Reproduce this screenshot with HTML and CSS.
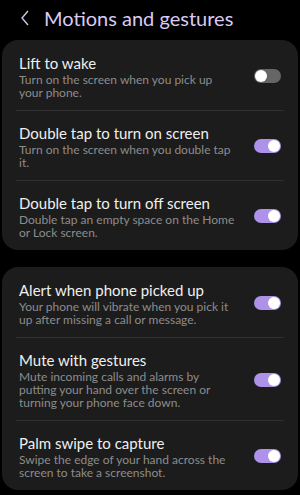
FILE: index.html
```html
<!DOCTYPE html>
<html lang="en">
  <head>
    <meta charset="UTF-8" />
    <meta name="viewport" content="width=device-width, initial-scale=1.0" />
    <title>Motions and gestures</title>
    <link rel="stylesheet" href="styles.css">
  </head>

  <body>
    <header class="top-bar">
      <span class="back">
        <svg width="10" height="16" viewBox="0 0 10 16">
          <path d="M8 1 L2 8 L8 15" fill="none" stroke="#cfc6df" stroke-width="1.4" />
        </svg>
      </span>
      <h1 class="page-title">Motions and gestures</h1>
    </header>

    <section class="card">
      <div class="row">
        <div class="texts">
          <div class="title">Lift to wake</div>
          <div class="desc">Turn on the screen when you pick up your phone.</div>
        </div>
        <span class="switch"></span>
      </div>
      <div class="row">
        <div class="texts">
          <div class="title">Double tap to turn on screen</div>
          <div class="desc">Turn on the screen when you double tap it.</div>
        </div>
        <span class="switch on"></span>
      </div>
      <div class="row">
        <div class="texts">
          <div class="title">Double tap to turn off screen</div>
          <div class="desc">Double tap an empty space on the Home or Lock screen.</div>
        </div>
        <span class="switch on"></span>
      </div>
    </section>

    <section class="card">
      <div class="row">
        <div class="texts">
          <div class="title">Alert when phone picked up</div>
          <div class="desc">Your phone will vibrate when you pick it up after missing a call or message.</div>
        </div>
        <span class="switch on"></span>
      </div>
      <div class="row">
        <div class="texts">
          <div class="title">Mute with gestures</div>
          <div class="desc">Mute incoming calls and alarms by putting your hand over the screen or turning your phone face down.</div>
        </div>
        <span class="switch on"></span>
      </div>
      <div class="row">
        <div class="texts">
          <div class="title">Palm swipe to capture</div>
          <div class="desc">Swipe the edge of your hand across the screen to take a screenshot.</div>
        </div>
        <span class="switch on"></span>
      </div>
    </section>
  </body>
</html>
```

FILE: styles.css
```css
body {
  margin: 0;
  background-color: #000;
  font-family: "Lato", "Open Sans", sans-serif;
  width: 300px;
}

.top-bar {
  height: 40px;
  display: flex;
  align-items: center;
  padding-left: 20px;
  box-sizing: border-box;
}

.back {
  display: flex;
  width: 24px;
  margin-top: -4px;
}

.page-title {
  margin: 0 0 4px 0;
  font-size: 20px;
  font-weight: 400;
  color: #d9cbf3;
}

.card {
  margin: 0 2px 17px 2px;
  background-color: #1c1c1c;
  border-radius: 16px;
}

.row {
  display: flex;
  align-items: center;
  padding: 13px 17px 11px 17px;
  position: relative;
}

.row + .row::before {
  content: "";
  position: absolute;
  top: 0;
  left: 14px;
  right: 14px;
  height: 1px;
  background-color: #303030;
}

.texts {
  flex: 1;
  padding-right: 16px;
}

.title {
  font-size: 15px;
  line-height: 20px;
  color: #efefef;
}

.desc {
  font-size: 12px;
  line-height: 13px;
  color: #8c8c8c;
}

.switch {
  width: 27px;
  height: 14px;
  border-radius: 7px;
  background-color: #666;
  position: relative;
  flex-shrink: 0;
}

.switch::after {
  content: "";
  position: absolute;
  top: 1px;
  left: 1px;
  width: 12px;
  height: 12px;
  border-radius: 50%;
  background-color: #fff;
}

.switch.on {
  background-color: #ae92e9;
}

.switch.on::after {
  left: 14px;
}
```
